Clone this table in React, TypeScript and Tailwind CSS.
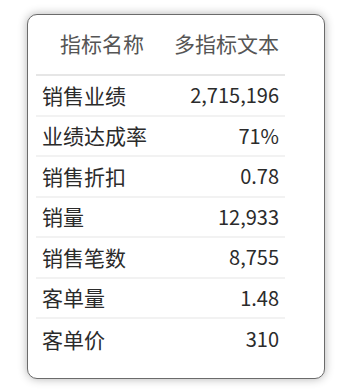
import React from "react";

const rows: [string, string][] = [
  ["销售业绩", "2,715,196"],
  ["业绩达成率", "71%"],
  ["销售折扣", "0.78"],
  ["销量", "12,933"],
  ["销售笔数", "8,755"],
  ["客单量", "1.48"],
  ["客单价", "310"],
];

export default function App() {
  return (
    <div
      className="w-[342px] h-[389px] bg-white pt-[14px] pl-[27px]"
      style={{ fontFamily: '"Noto Sans CJK SC", "Noto Sans", sans-serif' }}
    >
      <div className="w-[298px] h-[365px] rounded-[10px] border border-[#6b6b6b] bg-white shadow-[0_0_10px_rgba(0,0,0,0.3)] pl-[8px] pt-[8px]">
        <div className="w-[249px]">
          <div className="flex h-[53px] items-center border-b-2 border-[#e6e6e6] pb-[10px] text-[21px] text-[#555]">
            <div className="w-[132px] text-center">指标名称</div>
            <div className="flex-1 pr-[6px] text-right">多指标文本</div>
          </div>
          {rows.map(([k, v], i) => (
            <div
              key={k}
              className={`flex h-[40.5px] items-center px-[6px] text-[#2b2b2b] ${
                i < rows.length - 1 ? "border-b-2 border-[#f2f2f2]" : ""
              }`}
            >
              <div className="flex-1 text-[21px]">{k}</div>
              <div className="text-right text-[20px]">{v}</div>
            </div>
          ))}
        </div>
      </div>
    </div>
  );
}
